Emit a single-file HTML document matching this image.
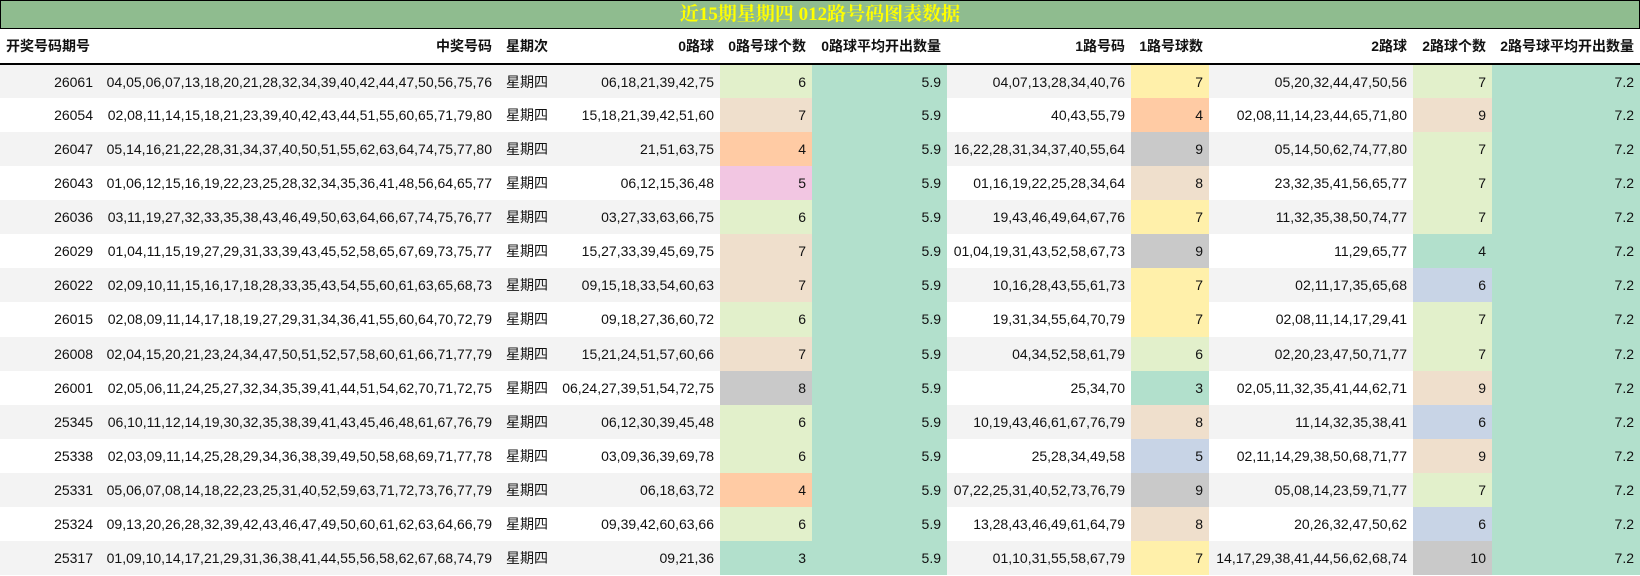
<!DOCTYPE html>
<html><head><meta charset="utf-8"><style>
*{margin:0;padding:0;box-sizing:border-box}
body{width:1640px;height:576px;background:#fff;overflow:hidden;font-family:"Liberation Sans","Noto Sans CJK SC",sans-serif;font-size:14px;color:#111}
.title{height:29px;background:#8fbc8f;border:1px solid #000;color:#ffff00;font:bold 19px "Liberation Serif","Noto Serif CJK SC","Noto Sans CJK SC",serif;text-align:center;line-height:27px}
table{border-collapse:collapse;table-layout:fixed;width:1640px}
th{height:35px;font-weight:bold;text-align:right;padding:0 6px;border-bottom:2px solid #000;white-space:nowrap}
th.l{text-align:left}
td{height:34.07px;text-align:right;padding:0 6px;white-space:nowrap}
td.l,th.w{text-align:left;padding-left:8px}
tr.g td{background:#f3f3f3}
tr td.a{background:#b2e0cc}
tr td.G{background:#e2f0cb}tr td.B{background:#efdfcc}tr td.O{background:#ffcba4}tr td.P{background:#f2c6e2}
tr td.Y{background:#fff0aa}tr td.R{background:#c9c9c9}tr td.T{background:#b2e0cc}tr td.U{background:#c8d4e6}
</style></head><body>
<div class="title">近15期星期四 012路号码图表数据</div>
<table>
<colgroup><col style="width:99px"><col style="width:399px"><col style="width:56px"><col style="width:166px"><col style="width:92px"><col style="width:135px"><col style="width:184px"><col style="width:78px"><col style="width:204px"><col style="width:79px"><col style="width:148px"></colgroup>
<tr><th class="l">开奖号码期号</th><th>中奖号码</th><th class="w">星期次</th><th>0路球</th><th>0路号球个数</th><th>0路球平均开出数量</th><th>1路号码</th><th>1路号球数</th><th>2路球</th><th>2路球个数</th><th>2路号球平均开出数量</th></tr>
<tr class="g"><td>26061</td><td>04,05,06,07,13,18,20,21,28,32,34,39,40,42,44,47,50,56,75,76</td><td class="l">星期四</td><td>06,18,21,39,42,75</td><td class="G">6</td><td class="a">5.9</td><td>04,07,13,28,34,40,76</td><td class="Y">7</td><td>05,20,32,44,47,50,56</td><td class="G">7</td><td class="a">7.2</td></tr>
<tr><td>26054</td><td>02,08,11,14,15,18,21,23,39,40,42,43,44,51,55,60,65,71,79,80</td><td class="l">星期四</td><td>15,18,21,39,42,51,60</td><td class="B">7</td><td class="a">5.9</td><td>40,43,55,79</td><td class="O">4</td><td>02,08,11,14,23,44,65,71,80</td><td class="B">9</td><td class="a">7.2</td></tr>
<tr class="g"><td>26047</td><td>05,14,16,21,22,28,31,34,37,40,50,51,55,62,63,64,74,75,77,80</td><td class="l">星期四</td><td>21,51,63,75</td><td class="O">4</td><td class="a">5.9</td><td>16,22,28,31,34,37,40,55,64</td><td class="R">9</td><td>05,14,50,62,74,77,80</td><td class="G">7</td><td class="a">7.2</td></tr>
<tr><td>26043</td><td>01,06,12,15,16,19,22,23,25,28,32,34,35,36,41,48,56,64,65,77</td><td class="l">星期四</td><td>06,12,15,36,48</td><td class="P">5</td><td class="a">5.9</td><td>01,16,19,22,25,28,34,64</td><td class="B">8</td><td>23,32,35,41,56,65,77</td><td class="G">7</td><td class="a">7.2</td></tr>
<tr class="g"><td>26036</td><td>03,11,19,27,32,33,35,38,43,46,49,50,63,64,66,67,74,75,76,77</td><td class="l">星期四</td><td>03,27,33,63,66,75</td><td class="G">6</td><td class="a">5.9</td><td>19,43,46,49,64,67,76</td><td class="Y">7</td><td>11,32,35,38,50,74,77</td><td class="G">7</td><td class="a">7.2</td></tr>
<tr><td>26029</td><td>01,04,11,15,19,27,29,31,33,39,43,45,52,58,65,67,69,73,75,77</td><td class="l">星期四</td><td>15,27,33,39,45,69,75</td><td class="B">7</td><td class="a">5.9</td><td>01,04,19,31,43,52,58,67,73</td><td class="R">9</td><td>11,29,65,77</td><td class="T">4</td><td class="a">7.2</td></tr>
<tr class="g"><td>26022</td><td>02,09,10,11,15,16,17,18,28,33,35,43,54,55,60,61,63,65,68,73</td><td class="l">星期四</td><td>09,15,18,33,54,60,63</td><td class="B">7</td><td class="a">5.9</td><td>10,16,28,43,55,61,73</td><td class="Y">7</td><td>02,11,17,35,65,68</td><td class="U">6</td><td class="a">7.2</td></tr>
<tr><td>26015</td><td>02,08,09,11,14,17,18,19,27,29,31,34,36,41,55,60,64,70,72,79</td><td class="l">星期四</td><td>09,18,27,36,60,72</td><td class="G">6</td><td class="a">5.9</td><td>19,31,34,55,64,70,79</td><td class="Y">7</td><td>02,08,11,14,17,29,41</td><td class="G">7</td><td class="a">7.2</td></tr>
<tr class="g"><td>26008</td><td>02,04,15,20,21,23,24,34,47,50,51,52,57,58,60,61,66,71,77,79</td><td class="l">星期四</td><td>15,21,24,51,57,60,66</td><td class="B">7</td><td class="a">5.9</td><td>04,34,52,58,61,79</td><td class="G">6</td><td>02,20,23,47,50,71,77</td><td class="G">7</td><td class="a">7.2</td></tr>
<tr><td>26001</td><td>02,05,06,11,24,25,27,32,34,35,39,41,44,51,54,62,70,71,72,75</td><td class="l">星期四</td><td>06,24,27,39,51,54,72,75</td><td class="R">8</td><td class="a">5.9</td><td>25,34,70</td><td class="T">3</td><td>02,05,11,32,35,41,44,62,71</td><td class="B">9</td><td class="a">7.2</td></tr>
<tr class="g"><td>25345</td><td>06,10,11,12,14,19,30,32,35,38,39,41,43,45,46,48,61,67,76,79</td><td class="l">星期四</td><td>06,12,30,39,45,48</td><td class="G">6</td><td class="a">5.9</td><td>10,19,43,46,61,67,76,79</td><td class="B">8</td><td>11,14,32,35,38,41</td><td class="U">6</td><td class="a">7.2</td></tr>
<tr><td>25338</td><td>02,03,09,11,14,25,28,29,34,36,38,39,49,50,58,68,69,71,77,78</td><td class="l">星期四</td><td>03,09,36,39,69,78</td><td class="G">6</td><td class="a">5.9</td><td>25,28,34,49,58</td><td class="U">5</td><td>02,11,14,29,38,50,68,71,77</td><td class="B">9</td><td class="a">7.2</td></tr>
<tr class="g"><td>25331</td><td>05,06,07,08,14,18,22,23,25,31,40,52,59,63,71,72,73,76,77,79</td><td class="l">星期四</td><td>06,18,63,72</td><td class="O">4</td><td class="a">5.9</td><td>07,22,25,31,40,52,73,76,79</td><td class="R">9</td><td>05,08,14,23,59,71,77</td><td class="G">7</td><td class="a">7.2</td></tr>
<tr><td>25324</td><td>09,13,20,26,28,32,39,42,43,46,47,49,50,60,61,62,63,64,66,79</td><td class="l">星期四</td><td>09,39,42,60,63,66</td><td class="G">6</td><td class="a">5.9</td><td>13,28,43,46,49,61,64,79</td><td class="B">8</td><td>20,26,32,47,50,62</td><td class="U">6</td><td class="a">7.2</td></tr>
<tr class="g"><td>25317</td><td>01,09,10,14,17,21,29,31,36,38,41,44,55,56,58,62,67,68,74,79</td><td class="l">星期四</td><td>09,21,36</td><td class="T">3</td><td class="a">5.9</td><td>01,10,31,55,58,67,79</td><td class="Y">7</td><td>14,17,29,38,41,44,56,62,68,74</td><td class="R">10</td><td class="a">7.2</td></tr>
</table>
</body></html>
